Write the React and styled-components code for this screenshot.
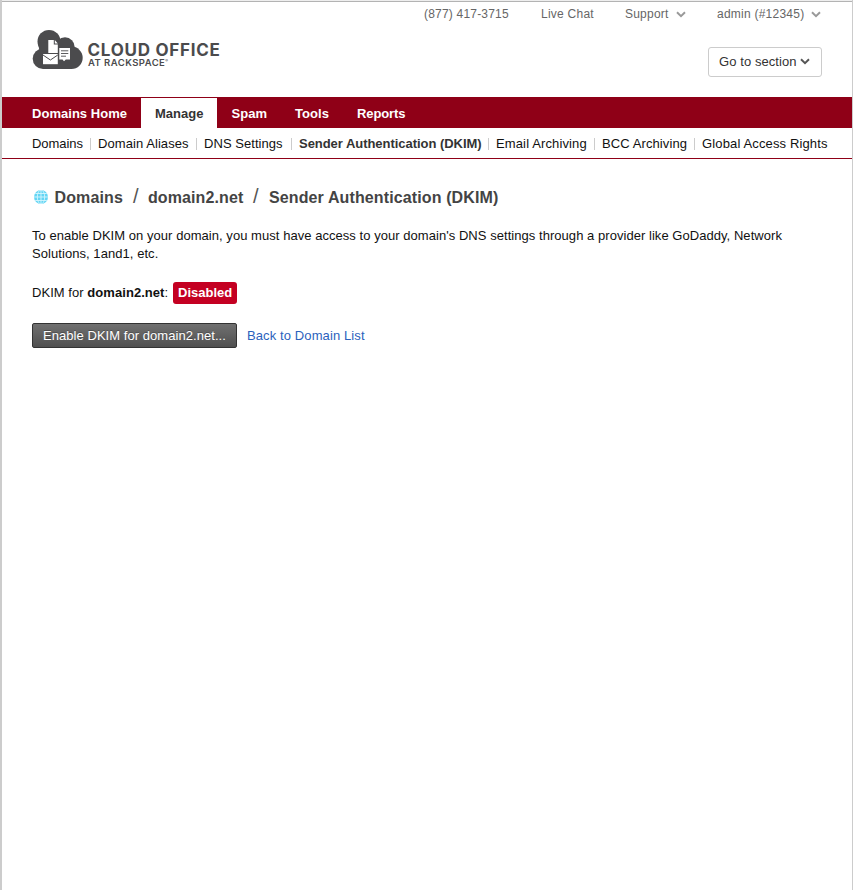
import React from "react";
import styled, { createGlobalStyle } from "styled-components";

const GlobalStyle = createGlobalStyle`
  * { box-sizing: border-box; }
  body { margin: 0; background: #fff; font-family: "Liberation Sans", Arial, sans-serif; font-size: 13px; color: #111; }
  a { color: inherit; text-decoration: none; }
`;

const Page = styled.div`
  min-height: 890px;
  border-left: 2px solid #ccc;
  border-right: 1px solid #ccc;
  overflow: hidden;
`;

const TopEdge = styled.div`
  height: 2px;
  margin: 0 -1px 0 -2px;
  background: linear-gradient(#eee 50%, #b3b3b3 50%);
`;

const Header = styled.header`
  height: 95px;
  padding: 0 30px;
  display: flex;
  justify-content: space-between;
`;

const Brand = styled.a`
  display: flex;
  padding-top: 27px;
  color: #4b4b4d;
`;

const CloudMark = styled.svg`
  width: 51px;
  height: 41px;
  flex: none;
`;

const BrandWords = styled.span`
  display: flex;
  flex-direction: column;
  padding: 13px 0 0 4.5px;
  font-family: Inter, sans-serif;
  font-weight: 700;
  white-space: nowrap;
`;

const BrandName = styled.span`
  font-size: 17px;
  line-height: 17px;
  letter-spacing: ${(p) => p.$track || 0}px;
`;

const BrandSub = styled.span`
  font-size: 9.5px;
  font-weight: 600;
  line-height: 8px;
  margin-left: 0.5px;
  letter-spacing: ${(p) => p.$track || 0}px;
`;

const Reg = styled.span`
  font-size: 4px;
  vertical-align: 4px;
  line-height: 0;
`;

const HeaderRight = styled.div`
  display: flex;
  flex-direction: column;
  align-items: flex-end;
`;

const Utilities = styled.nav`
  display: flex;
  height: 24px;
  line-height: 24px;
  font-size: 12px;
  color: #666;
`;

const Utility = styled.a`
  display: flex;
  align-items: center;
  white-space: nowrap;
  width: ${(p) => p.$w}px;
  letter-spacing: ${(p) => p.$track || 0}px;
`;

const Chevron = styled.svg`
  width: 10px;
  height: 7px;
  flex: none;
  margin-left: ${(p) => p.$gap}px;
  fill: none;
  stroke: ${(p) => p.$color};
  stroke-width: 2;
`;

const SectionButton = styled.button`
  display: flex;
  align-items: center;
  width: 114px;
  height: 30px;
  margin-top: 21px;
  padding: 0 0 1px 10px;
  border: 1px solid #ccc;
  border-radius: 3px;
  background: #fff;
  color: #333;
  font: 13px "Liberation Sans", Arial, sans-serif;
  letter-spacing: 0.08px;
  white-space: nowrap;
`;

const MainNav = styled.nav`
  display: flex;
  height: 31px;
  padding: 1px 0 0 16px;
  background: #8f0017;
`;

const Tab = styled.a`
  width: ${(p) => p.$w}px;
  padding-left: ${(p) => p.$indent || 14}px;
  line-height: 31px;
  font-weight: 700;
  white-space: nowrap;
  color: ${(p) => (p.$active ? "#333" : "#fff")};
  background: ${(p) => (p.$active ? "#fff" : "transparent")};
  letter-spacing: ${(p) => p.$track || 0}px;
`;

const SubNav = styled.nav`
  display: flex;
  height: 31px;
  padding-left: 30px;
  border-bottom: 1px solid #8f0017;
  line-height: 31px;
`;

const SubLink = styled.a`
  display: flex;
  align-items: center;
  justify-content: space-between;
  width: ${(p) => p.$w}px;
  margin-right: 7px;
  white-space: nowrap;
  flex: none;
  color: ${(p) => (p.$active ? "#333" : "#111")};
  font-weight: ${(p) => (p.$active ? 700 : 400)};
  letter-spacing: ${(p) => p.$track || 0}px;
`;

const Divider = styled.i`
  width: 1px;
  height: 12px;
  margin-top: 2px;
  background: #ccc;
`;

const Content = styled.main`
  padding: 27px 30px 0;
`;

const Crumbs = styled.h1`
  display: flex;
  align-items: center;
  height: 24px;
  margin: 0;
  padding-left: 2px;
  font-size: 16px;
  color: #444;
  white-space: nowrap;
`;

const Globe = styled.svg`
  width: 14px;
  height: 14px;
  margin: -2px 6.5px 0 0;
  flex: none;
`;

const Crumb = styled.span`
  width: ${(p) => p.$w}px;
  letter-spacing: ${(p) => p.$track || 0}px;
`;

const Slash = styled.span`
  width: ${(p) => p.$w}px;
  font-size: 20px;
  line-height: 20px;
  font-weight: 400;
  margin-top: -4px;
  color: #555;
`;

const Intro = styled.p`
  margin: 17px 0 0;
  line-height: 18px;
`;

const Line = styled.span`
  display: block;
  white-space: nowrap;
  letter-spacing: ${(p) => p.$track || 0}px;
`;

const Status = styled.div`
  display: flex;
  align-items: center;
  height: 22px;
  margin-top: 19px;
  white-space: nowrap;
`;

const StatusText = styled.span`
  width: 141px;
  line-height: 22px;
  letter-spacing: ${(p) => p.$track || 0}px;
`;

const Badge = styled.span`
  width: 64px;
  height: 22px;
  line-height: 22px;
  padding-left: 5px;
  border-radius: 3px;
  background: #c40022;
  color: #fff;
  font-weight: 700;
  letter-spacing: ${(p) => p.$track || 0}px;
`;

const Actions = styled.div`
  display: flex;
  align-items: center;
  margin-top: 19px;
  height: 25px;
`;

const PrimaryButton = styled.button`
  width: 205px;
  height: 25px;
  margin-right: 10px;
  padding: 0 0 0 10px;
  text-align: left;
  border: 1px solid #333;
  border-radius: 2px;
  background: linear-gradient(#707070, #505050);
  color: #fff;
  text-shadow: 0 -1px 0 rgba(0, 0, 0, 0.25);
  font: 13px "Liberation Sans", Arial, sans-serif;
  white-space: nowrap;
  letter-spacing: ${(p) => p.$track || 0}px;
`;

const BackLink = styled.a`
  color: #2b62bd;
  white-space: nowrap;
  letter-spacing: ${(p) => p.$track || 0}px;
`;

const Caret = ({ gap, color }) => (
  <Chevron $gap={gap} $color={color} viewBox="0 0 10 7">
    <path d="M1 1.3 5 5.1 9 1.3" />
  </Chevron>
);

const tabs = [
  { label: "Domains Home", w: 123, track: 0.03 },
  { label: "Manage", w: 76, track: 0, active: true },
  { label: "Spam", w: 64, track: 0, indent: 14.6 },
  { label: "Tools", w: 62, track: 0.05 },
  { label: "Reports", w: 80, track: -0.1 },
];

const sections = [
  { label: "Domains", w: 59, track: -0.05 },
  { label: "Domain Aliases", w: 99, track: 0.07 },
  { label: "DNS Settings", w: 88, track: 0.05 },
  { label: "Sender Authentication (DKIM)", w: 190, track: -0.04, active: true },
  { label: "Email Archiving", w: 99, track: 0.13 },
  { label: "BCC Archiving", w: 93, track: 0.1 },
  { label: "Global Access Rights", w: 130, track: 0.14 },
];

export default function App() {
  return (
    <Page>
      <GlobalStyle />
      <TopEdge />
      <Header>
        <Brand href="#">
          <CloudMark viewBox="0 0 51 41">
            <g fill="#4b4b4d">
              <circle cx="17" cy="12.500" r="11.500" />
              <circle cx="33" cy="18" r="9.700" />
              <circle cx="11" cy="29.700" r="10.300" />
              <circle cx="39.500" cy="28.800" r="11.200" />
              <path d="M6 14 27 12l13 10v18H11Z" />
            </g>
            <path fill="#fff" d="M16.300 11h5.500v4.500h4V24h-9.500Z" />
            <path fill="#fff" d="M22.800 11 25.800 14.400h-3Z" />
            <path fill="#fff" d="M11 25h14.800v10.200H11Z" />
            <path fill="none" stroke="#4b4b4d" d="m11 26 7.400 5 7.400-5" />
            <path fill="#fff" d="M27.300 19H38v11.500h-4.200L32 32.300l-1.500-1.800h-3.200Z" />
            <path stroke="#4b4b4d" strokeWidth=".9" d="M29 21.800h7.300M29 24.500h7.300M29 27.200h5" />
          </CloudMark>
          <BrandWords>
            <BrandName $track={0.74}>CLOUD OFFICE</BrandName>
            <BrandSub $track={0.45}>
              AT RACKSPACE<Reg>®</Reg>
            </BrandSub>
          </BrandWords>
        </Brand>
        <HeaderRight>
          <Utilities>
            <Utility $w={117} $track={0.2}>(877) 417-3715</Utility>
            <Utility $w={84} $track={0.25}>Live Chat</Utility>
            <Utility $w={92} $track={0.22}>Support<Caret gap={7} color="#999" /></Utility>
            <Utility $w={105} $track={0.24}>admin (#12345)<Caret gap={7} color="#999" /></Utility>
          </Utilities>
          <SectionButton>Go to section<Caret gap={3.500} color="#555" /></SectionButton>
        </HeaderRight>
      </Header>
      <MainNav>
        {tabs.map((t) => (
          <Tab key={t.label} href="#" $w={t.w} $active={t.active} $track={t.track} $indent={t.indent}>{t.label}</Tab>
        ))}
      </MainNav>
      <SubNav>
        {sections.map((s, i) => (
          <SubLink key={s.label} href="#" $w={s.w} $active={s.active} $track={s.track}>
            {s.label}
            {i < sections.length - 1 && <Divider />}
          </SubLink>
        ))}
      </SubNav>
      <Content>
        <Crumbs>
          <Globe viewBox="0 0 14 14">
            <circle cx="7" cy="7" r="7" fill="#62d5f4" />
            <g fill="none" stroke="#d4f5fd" strokeWidth=".9">
              <path d="M7 0v14M0 7h14M1.200 3.500h11.600M1.200 10.500h11.600" />
              <ellipse cx="7" cy="7" rx="3.700" ry="7" />
            </g>
          </Globe>
          <Crumb $w={78.5} $track={0.12}>Domains</Crumb>
          <Slash $w={15}>/</Slash>
          <Crumb $w={105} $track={0.1}>domain2.net</Crumb>
          <Slash $w={16}>/</Slash>
          <Crumb $w={240} $track={0.12}>Sender Authentication (DKIM)</Crumb>
        </Crumbs>
        <Intro>
          <Line $track={0.046}>To enable DKIM on your domain, you must have access to your domain's DNS settings through a provider like GoDaddy, Network</Line>
          <Line $track={0.06}>Solutions, 1and1, etc.</Line>
        </Intro>
        <Status>
          <StatusText $track={0.05}>DKIM for <b>domain2.net</b>:</StatusText>
          <Badge>Disabled</Badge>
        </Status>
        <Actions>
          <PrimaryButton $track={0.05}>Enable DKIM for domain2.net...</PrimaryButton>
          <BackLink href="#" $track={0.11}>Back to Domain List</BackLink>
        </Actions>
      </Content>
    </Page>
  );
}
